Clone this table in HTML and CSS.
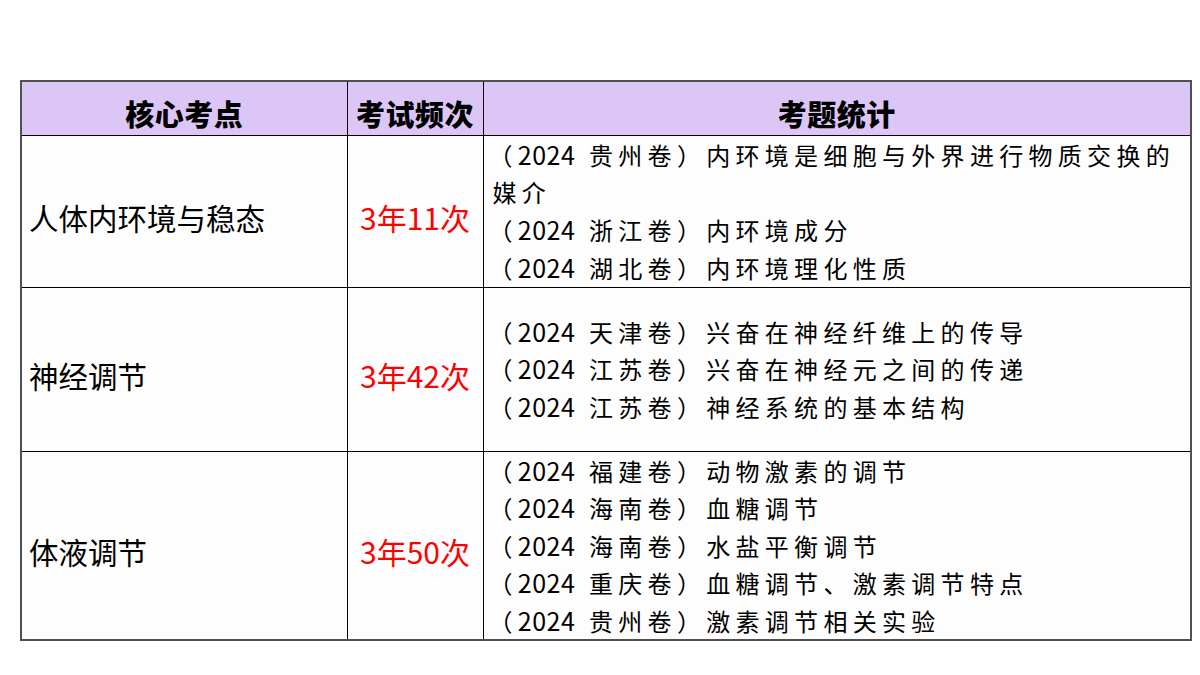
FILE: index.html
```html
<!DOCTYPE html>
<html lang="zh">
<head>
<meta charset="utf-8">
<link rel="stylesheet" href="styles.css">
</head>
<body>
<div class="page">
<table class="stats">
  <colgroup>
    <col class="c1"><col class="c2"><col class="c3">
  </colgroup>
  <thead>
    <tr class="head">
      <th>核心考点</th>
      <th>考试频次</th>
      <th>考题统计</th>
    </tr>
  </thead>
  <tbody>
    <tr class="r1">
      <td class="topic">人体内环境与稳态</td>
      <td class="freq">3年11次</td>
      <td class="items">
        <div class="ln">（<span class="yr">2024</span> 贵州卷）内环境是细胞与外界进行物质交换的</div>
        <div class="wrap">媒介</div>
        <div class="ln">（<span class="yr">2024</span> 浙江卷）内环境成分</div>
        <div class="ln">（<span class="yr">2024</span> 湖北卷）内环境理化性质</div>
      </td>
    </tr>
    <tr class="r2">
      <td class="topic">神经调节</td>
      <td class="freq">3年42次</td>
      <td class="items">
        <div class="ln">（<span class="yr">2024</span> 天津卷）兴奋在神经纤维上的传导</div>
        <div class="ln">（<span class="yr">2024</span> 江苏卷）兴奋在神经元之间的传递</div>
        <div class="ln">（<span class="yr">2024</span> 江苏卷）神经系统的基本结构</div>
      </td>
    </tr>
    <tr class="r3">
      <td class="topic">体液调节</td>
      <td class="freq">3年50次</td>
      <td class="items">
        <div class="ln">（<span class="yr">2024</span> 福建卷）动物激素的调节</div>
        <div class="ln">（<span class="yr">2024</span> 海南卷）血糖调节</div>
        <div class="ln">（<span class="yr">2024</span> 海南卷）水盐平衡调节</div>
        <div class="ln">（<span class="yr">2024</span> 重庆卷）血糖调节、激素调节特点</div>
        <div class="ln">（<span class="yr">2024</span> 贵州卷）激素调节相关实验</div>
      </td>
    </tr>
  </tbody>
</table>
</div>
</body>
</html>
```

FILE: styles.css
```css
html, body {
  margin: 0;
  padding: 0;
  background: #ffffff;
}
.page {
  width: 1200px;
  height: 675px;
  padding: 80px 0 0 20px;
  box-sizing: border-box;
}
.stats {
  border-collapse: collapse;
  table-layout: fixed;
  width: 1170px;
  border: 2px solid #505050;
  font-family: "Noto Sans CJK SC", "Noto Sans", sans-serif;
  color: #000;
}
.c1 { width: 326px; }
.c2 { width: 136px; }
.c3 { width: 708px; }
.stats th, .stats td {
  border: 1.5px solid #000;
  padding: 0;
  box-sizing: border-box;
}
.head th {
  height: 54px;
  background: #dcc6f5;
  font-size: 29px;
  font-weight: 900;
  text-align: center;
  vertical-align: middle;
  line-height: 36px;
  padding-top: 10px;
  letter-spacing: 0.5px;
}
.stats tbody td { background: #fdfdfd; }
.r1 td { height: 152px; }
.r2 td { height: 164px; }
.r3 td { height: 189px; }
.topic {
  font-size: 29.5px;
  padding: 12px 0 0 7px !important;
  vertical-align: middle;
  line-height: 36px;
}
.freq {
  font-size: 30px;
  color: #ff0000;
  text-align: center;
  vertical-align: middle;
  padding: 12px 0 0 0 !important;
  line-height: 36px;
}
.items {
  font-size: 24px;
  line-height: 37.6px;
  vertical-align: middle;
  padding-left: 9px !important;
  letter-spacing: 5.3px;
  white-space: nowrap;
}
.items div {
  height: 37.6px;
  overflow: hidden;
}
.items .ln {
  margin-left: -4px;
}
.items .yr {
  font-size: 25px;
  line-height: 1;
  letter-spacing: 0.5px;
  margin-right: 3px;
}
```
